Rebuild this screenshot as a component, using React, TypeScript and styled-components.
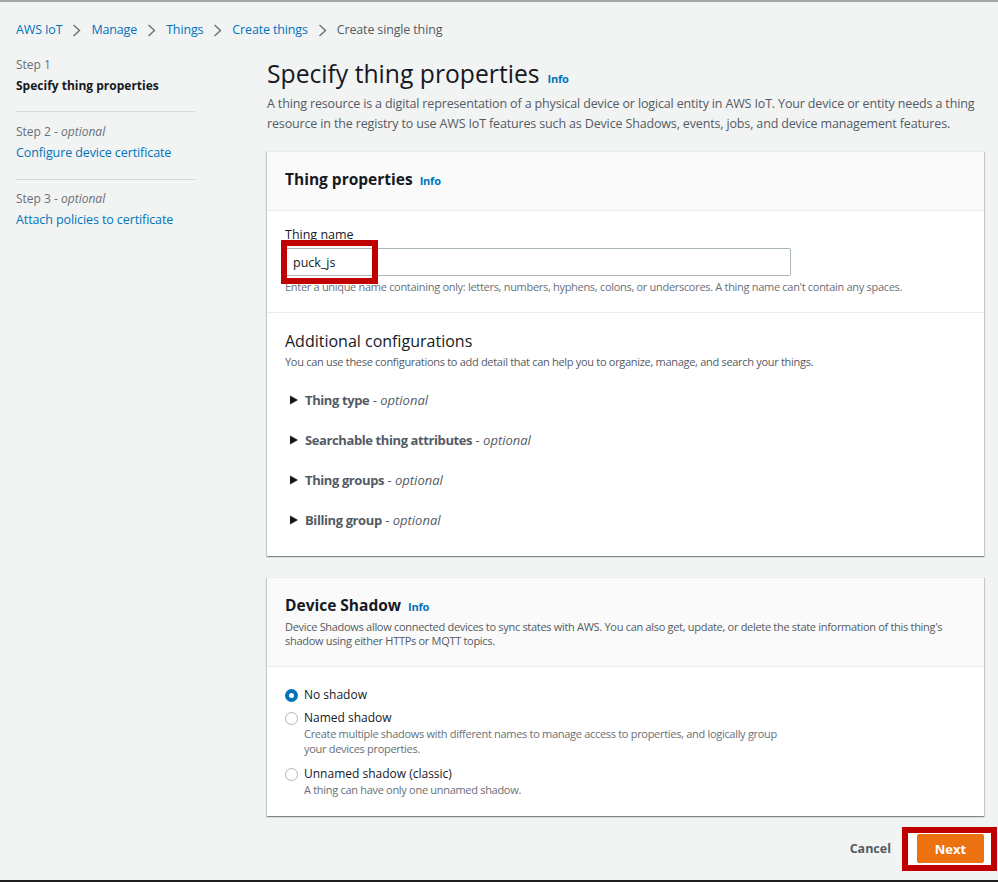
import React from "react";
import styled, { createGlobalStyle } from "styled-components";

const GlobalStyle = createGlobalStyle`
  html, body { margin: 0; padding: 0; background: #f2f3f3; }
  body { font-family: "Open Sans", "Noto Sans", sans-serif; color: #16191f; }
  * { box-sizing: border-box; }
`;

const Page = styled.div`
  width: 998px;
  height: 882px;
  border-top: 2px solid #a4a8aa;
  border-bottom: 2px solid #1e1e1e;
  padding: 0 14px 0 16px;
  background: #f2f3f3;
  display: flex;
  flex-direction: column;
  overflow: hidden;
`;

const Breadcrumbs = styled.nav`
  display: flex;
  align-items: center;
  gap: 10px;
  padding-top: 18px;
  font-size: 12.5px;
  letter-spacing: -0.15px;
  line-height: 20px;
`;

const Crumb = styled.span<{ $current?: boolean }>`
  color: ${(p) => (p.$current ? "#545b64" : "#0073bb")};
`;

const Layout = styled.div`
  display: grid;
  grid-template-columns: 179px 717px;
  column-gap: 72px;
  margin-top: 4px;
`;

const SideNav = styled.ol`
  list-style: none;
  margin: 0;
  padding: 0;
`;

const Step = styled.li`
  padding: 12px 0 16px;
  border-bottom: 1px solid #d5dbdb;
  &:first-child { padding-top: 13px; padding-bottom: 15px; }
  &:last-child { border-bottom: none; padding-top: 11px; }
`;

const StepLabel = styled.div`
  font-size: 12px;
  line-height: 16px;
  color: #687078;
  em { font-style: italic; }
`;

const StepTitle = styled.div<{ $current?: boolean }>`
  margin-top: 3px;
  font-size: ${(p) => (p.$current ? "12px" : "12.5px")};
  letter-spacing: ${(p) => (p.$current ? "0" : "-0.1px")};
  line-height: 20px;
  font-weight: ${(p) => (p.$current ? 700 : 400)};
  color: ${(p) => (p.$current ? "#16191f" : "#0073bb")};
`;

const Main = styled.main`
  display: flex;
  flex-direction: column;
`;

const Title = styled.h1`
  margin: 15px 0 0;
  font-size: 24.7px;
  line-height: 30px;
  font-weight: 400;
  color: #16191f;
`;

const Info = styled.span<{ $gap?: number }>`
  margin-left: ${(p) => p.$gap ?? 7}px;
  font-size: 11px;
  font-weight: 700;
  color: #0073bb;
  letter-spacing: -0.2px;
`;

const Description = styled.p`
  margin: 0;
  font-size: 12.5px;
  letter-spacing: -0.15px;
  line-height: 20px;
  color: #545b64;
`;

const Card = styled.section<{ $gap: number }>`
  margin-top: ${(p) => p.$gap}px;
  background: #fff;
  box-shadow: 0 1px 1px 0 rgba(0, 28, 36, 0.3), 1px 1px 1px 0 rgba(0, 28, 36, 0.15),
    -1px 1px 1px 0 rgba(0, 28, 36, 0.15);
  border-top: 1px solid #eaeded;
`;

const CardHeader = styled.header<{ $pt: number; $pb: number }>`
  background: #fafafa;
  border-bottom: 1px solid #eaeded;
  padding: ${(p) => p.$pt}px 18px ${(p) => p.$pb}px;
`;

const CardTitle = styled.h2`
  margin: 0;
  font-size: 15.5px;
  line-height: 22px;
  font-weight: 700;
  color: #16191f;
`;

const SmallText = styled.p<{ $mt?: number }>`
  margin: ${(p) => p.$mt ?? 0}px 0 0;
  font-size: 11px;
  letter-spacing: -0.3px;
  line-height: 14px;
  color: #545b64;
`;

const Section = styled.div<{ $pt: number; $pb: number; $divider?: boolean }>`
  padding: ${(p) => p.$pt}px 18px ${(p) => p.$pb}px;
  border-bottom: ${(p) => (p.$divider ? "1px solid #eaeded" : "none")};
`;

const FieldLabel = styled.label`
  display: block;
  font-size: 12.5px;
  line-height: 20px;
  color: #16191f;
`;

const InputWrap = styled.div`
  position: relative;
  width: 506px;
  margin-top: 3px;
`;

const TextInput = styled.input`
  display: block;
  width: 100%;
  height: 28px;
  padding: 0 7px;
  border: 1px solid #aab7b8;
  border-radius: 2px;
  background: #fff;
  font-family: "Open Sans", "Noto Sans", sans-serif;
  font-size: 12.5px;
  color: #16191f;
  outline: none;
`;

const Highlight = styled.span<{ $l: number; $t: number; $r: number; $b: number; $fill?: boolean }>`
  position: absolute;
  left: ${(p) => p.$l}px;
  top: ${(p) => p.$t}px;
  right: ${(p) => p.$r}px;
  bottom: ${(p) => p.$b}px;
  border: 6px solid #c00000;
  background: ${(p) => (p.$fill ? "#fff" : "transparent")};
  pointer-events: none;
  z-index: ${(p) => (p.$fill ? 0 : 2)};
`;

const HelpText = styled.div`
  margin-top: 3px;
  font-size: 11px;
  letter-spacing: -0.3px;
  line-height: 16px;
  color: #687078;
`;

const SubTitle = styled.h3`
  margin: 0;
  font-size: 16px;
  line-height: 22px;
  font-weight: 400;
  color: #16191f;
`;

const ExpandList = styled.div`
  display: flex;
  flex-direction: column;
  gap: 20px;
  margin-top: 21px;
  padding-left: 5px;
`;

const ExpandRow = styled.div`
  display: flex;
  align-items: center;
  gap: 7px;
  font-size: 13px;
  line-height: 20px;
  color: #545b64;
  b { color: #545b64; font-weight: 700; letter-spacing: -0.4px; }
  em { font-style: italic; }
`;

const RadioGroup = styled.div`
  display: flex;
  flex-direction: column;
  gap: 7px;
`;

const RadioItem = styled.div`
  display: grid;
  grid-template-columns: 13px 1fr;
  column-gap: 6px;
  align-items: center;
`;

const RadioDot = styled.span<{ $checked?: boolean }>`
  width: 13px;
  height: 13px;
  border-radius: 50%;
  background: #fff;
  border: ${(p) => (p.$checked ? "4px solid #0073bb" : "1px solid #aab7b8")};
`;

const RadioLabel = styled.span`
  font-size: 12px;
  line-height: 16px;
  color: #16191f;
`;

const RadioDesc = styled.div`
  grid-column: 2;
  margin: 0 0 3px;
  font-size: 11px;
  letter-spacing: -0.3px;
  line-height: 15px;
  color: #687078;
  max-width: 482px;
`;

const Footer = styled.div`
  display: flex;
  justify-content: flex-end;
  align-items: center;
  gap: 26px;
  margin-top: 18px;
`;

const LinkButton = styled.button`
  border: none;
  background: none;
  padding: 0;
  font-family: "Open Sans", "Noto Sans", sans-serif;
  font-size: 12.5px;
  font-weight: 700;
  color: #545b64;
`;

const ButtonWrap = styled.div`
  position: relative;
`;

const PrimaryButton = styled.button`
  position: relative;
  z-index: 1;
  height: 29px;
  width: 67px;
  border: 1px solid #ec7211;
  border-radius: 2px;
  background: #ec7211;
  color: #fff;
  font-family: "Open Sans", "Noto Sans", sans-serif;
  font-size: 13px;
  font-weight: 700;
`;

const Chevron = () => (
  <svg width="9" height="13" viewBox="0 0 9 13" aria-hidden="true">
    <polyline points="1.5,1 7.5,6.5 1.5,12" fill="none" stroke="#687078" strokeWidth="1.4" />
  </svg>
);

const Caret = () => (
  <svg width="8" height="10" viewBox="0 0 8 10" aria-hidden="true">
    <polygon points="0,0.5 8,5 0,9.5" fill="#16191f" />
  </svg>
);

const crumbs = ["AWS IoT", "Manage", "Things", "Create things"];

const steps = [
  { label: "Step 1", optional: false, title: "Specify thing properties", current: true },
  { label: "Step 2", optional: true, title: "Configure device certificate", current: false },
  { label: "Step 3", optional: true, title: "Attach policies to certificate", current: false },
];

const configs = ["Thing type", "Searchable thing attributes", "Thing groups", "Billing group"];

export default function App() {
  return (
    <>
      <GlobalStyle />
      <Page>
        <Breadcrumbs>
          {crumbs.map((c) => (
            <React.Fragment key={c}>
              <Crumb>{c}</Crumb>
              <Chevron />
            </React.Fragment>
          ))}
          <Crumb $current>Create single thing</Crumb>
        </Breadcrumbs>
        <Layout>
          <SideNav>
            {steps.map((s) => (
              <Step key={s.label}>
                <StepLabel>
                  {s.label}
                  {s.optional && (
                    <>
                      {" - "}
                      <em>optional</em>
                    </>
                  )}
                </StepLabel>
                <StepTitle $current={s.current}>{s.title}</StepTitle>
              </Step>
            ))}
          </SideNav>
          <Main>
            <Title>
              Specify thing properties<Info $gap={8}>Info</Info>
            </Title>
            <Description>
              A thing resource is a digital representation of a physical device or logical entity in AWS IoT. Your
              device or entity needs a thing resource in the registry to use AWS IoT features such as Device Shadows,
              events, jobs, and device management features.
            </Description>

            <Card $gap={17}>
              <CardHeader $pt={16} $pb={18}>
                <CardTitle>
                  Thing properties<Info>Info</Info>
                </CardTitle>
              </CardHeader>
              <Section $pt={14} $pb={17} $divider>
                <FieldLabel>Thing name</FieldLabel>
                <InputWrap>
                  <TextInput defaultValue="puck_js" />
                  <Highlight $l={-4} $t={-8} $r={413} $b={-8} />
                </InputWrap>
                <HelpText>
                  Enter a unique name containing only: letters, numbers, hyphens, colons, or underscores. A thing name
                  can't contain any spaces.
                </HelpText>
              </Section>
              <Section $pt={17} $pb={26}>
                <SubTitle>Additional configurations</SubTitle>
                <SmallText $mt={3}>
                  You can use these configurations to add detail that can help you to organize, manage, and search your
                  things.
                </SmallText>
                <ExpandList>
                  {configs.map((c) => (
                    <ExpandRow key={c}>
                      <Caret />
                      <span>
                        <b>{c}</b> - <em>optional</em>
                      </span>
                    </ExpandRow>
                  ))}
                </ExpandList>
              </Section>
            </Card>

            <Card $gap={21}>
              <CardHeader $pt={16} $pb={18}>
                <CardTitle>
                  Device Shadow<Info>Info</Info>
                </CardTitle>
                <SmallText $mt={2}>
                  Device Shadows allow connected devices to sync states with AWS. You can also get, update, or delete
                  the state information of this thing's shadow using either HTTPs or MQTT topics.
                </SmallText>
              </CardHeader>
              <Section $pt={20} $pb={16}>
                <RadioGroup>
                  <RadioItem>
                    <RadioDot $checked />
                    <RadioLabel>No shadow</RadioLabel>
                  </RadioItem>
                  <RadioItem>
                    <RadioDot />
                    <RadioLabel>Named shadow</RadioLabel>
                    <RadioDesc>
                      Create multiple shadows with different names to manage access to properties, and logically group
                      your devices properties.
                    </RadioDesc>
                  </RadioItem>
                  <RadioItem>
                    <RadioDot />
                    <RadioLabel>Unnamed shadow (classic)</RadioLabel>
                    <RadioDesc>A thing can have only one unnamed shadow.</RadioDesc>
                  </RadioItem>
                </RadioGroup>
              </Section>
            </Card>

            <Footer>
              <LinkButton>Cancel</LinkButton>
              <ButtonWrap>
                <Highlight $l={-15} $t={-7} $r={-13} $b={-8} $fill />
                <PrimaryButton>Next</PrimaryButton>
              </ButtonWrap>
            </Footer>
          </Main>
        </Layout>
      </Page>
    </>
  );
}
